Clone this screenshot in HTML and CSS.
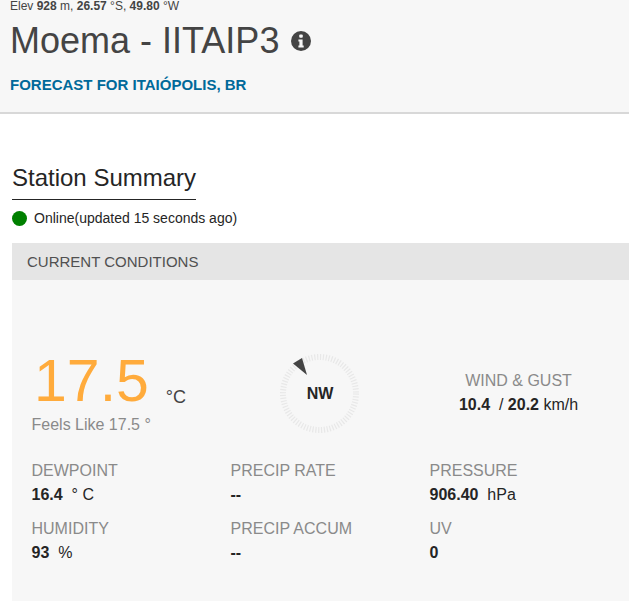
FILE: index.html
```html
<!DOCTYPE html>
<html lang="en">
<head>
<meta charset="utf-8">
<title>Moema - IITAIP3</title>
<link rel="stylesheet" href="styles.css">
</head>
<body>
<header class="hero">
  <div class="elev">Elev <b>928</b> m, <b>26.57</b> °S, <b>49.80</b> °W</div>
  <h1 class="title"><span>Moema - IITAIP3</span>
    <svg class="info" viewBox="0 0 20 20" aria-hidden="true"><circle cx="10" cy="10" r="10" fill="#444"/><rect x="8.2" y="3.6" width="3.6" height="3.2" rx="1" fill="#f7f7f7"/><path d="M7.4 8.4h4.2v6h1.1v2.1H7.4v-2.1h1v-3.9h-1z" fill="#f7f7f7"/></svg>
  </h1>
  <a class="forecast" href="#">FORECAST FOR ITAIÓPOLIS, BR</a>
</header>
<main class="content">
  <h2 class="summary">Station Summary</h2>
  <div class="status"><span class="dot"></span><span>Online(updated 15 seconds ago)</span></div>
  <section class="panel">
    <div class="panel-head">CURRENT CONDITIONS</div>
    <div class="panel-body">
      <div class="top">
        <div class="temp-col">
          <div class="temp"><span class="temp-val">17.5</span><span class="temp-unit">°C</span></div>
          <div class="feels">Feels Like 17.5 °</div>
        </div>
        <div class="compass-col">
          <div class="compass">
            <svg viewBox="0 0 80 80" aria-hidden="true">
              <circle cx="39.5" cy="39.5" r="36.5" fill="none" stroke="#e8e8e8" stroke-width="6" stroke-dasharray="1.2 1.67"/>
              <path d="M13 9.5l9-5.5 5 17z" fill="#444"/>
            </svg>
            <span class="dir">NW</span>
          </div>
        </div>
        <div class="wind-col">
          <div class="label">WIND &amp; GUST</div>
          <div class="value"><b>10.4</b> &nbsp;/ <b>20.2</b> km/h</div>
        </div>
      </div>
      <div class="stats">
        <div><div class="label">DEWPOINT</div><div class="value"><b>16.4</b> &nbsp;° C</div></div>
        <div><div class="label">PRECIP RATE</div><div class="value"><b>--</b></div></div>
        <div><div class="label">PRESSURE</div><div class="value"><b>906.40</b> &nbsp;hPa</div></div>
        <div><div class="label">HUMIDITY</div><div class="value"><b>93</b> &nbsp;%</div></div>
        <div><div class="label">PRECIP ACCUM</div><div class="value"><b>--</b></div></div>
        <div><div class="label">UV</div><div class="value"><b>0</b></div></div>
      </div>
    </div>
  </section>
</main>
</body>
</html>
```
FILE: styles.css
```css
* { box-sizing: border-box; }
html, body { margin: 0; height: 601px; overflow: hidden; background: #fff; }
body { font-family: "Liberation Sans", Arial, sans-serif; color: #252525; width: 629px; }
.hero { height: 114px; background: #f7f7f7; border-bottom: 2px solid #d8d8d8; padding-left: 10px; }
.elev { font-size: 12px; line-height: 12px; color: #444; }
.title { margin: 9px 0 0; display: flex; align-items: center; gap: 13px; font-weight: 400; font-size: 36px; line-height: 40px; height: 40px; color: #444; }
.info { width: 20px; height: 20px; margin-left: -1px; }
.forecast { display: block; margin-top: 15px; font-size: 15px; line-height: 18px; font-weight: 700; color: #00699a; text-decoration: none; }
.content { padding: 50px 0 0 12px; }
.summary { display: inline-block; margin: 0; font-size: 24px; font-weight: 400; line-height: 28px; padding-bottom: 7px; border-bottom: 1px solid #252525; }
.status { display: flex; align-items: center; gap: 7px; margin-top: 10px; font-size: 14px; line-height: 16px; }
.dot { width: 15px; height: 15px; border-radius: 50%; background: #008000; }
.panel { margin-top: 17px; width: 640px; background: #f7f7f7; height: 360px; }
.panel-head { height: 37px; background: #e5e5e5; padding-left: 15px; font-size: 15px; line-height: 38px; color: #505050; }
.panel-body { padding: 0 0 0 20px; }
.top { display: flex; height: 172px; padding-top: 69px; }
.temp-col { width: 199px; padding-top: 1px; }
.temp { display: flex; align-items: flex-start; height: 62px; line-height: 62px; padding-left: 2px; }
.temp-val { font-size: 59px; color: #ffab3c; }
.temp-unit { font-size: 18px; line-height: 20px; margin: 37px 0 0 17px; color: #444; }
.feels { font-size: 16px; line-height: 18px; margin: 4px 0 0 -0.5px; color: #8a8a8a; }
.compass-col { width: 199px; margin-top: 5px; padding-left: 49px; }
.compass { position: relative; width: 80px; height: 80px; }
.compass svg { display: block; width: 80px; height: 80px; }
.dir { position: absolute; inset: 0; display: flex; align-items: center; justify-content: center; font-size: 16px; font-weight: 700; }
.wind-col { width: 199px; padding-top: 22px; text-align: center; margin-left: -11px; }
.label { font-size: 16px; line-height: 20px; color: #8a8a8a; }
.value { font-size: 16px; line-height: 20px; color: #252525; margin-top: 4px; }
.stats { display: grid; grid-template-columns: repeat(3, 199px); grid-auto-rows: 58px; margin: 9px 0 0 -0.5px; }
```
